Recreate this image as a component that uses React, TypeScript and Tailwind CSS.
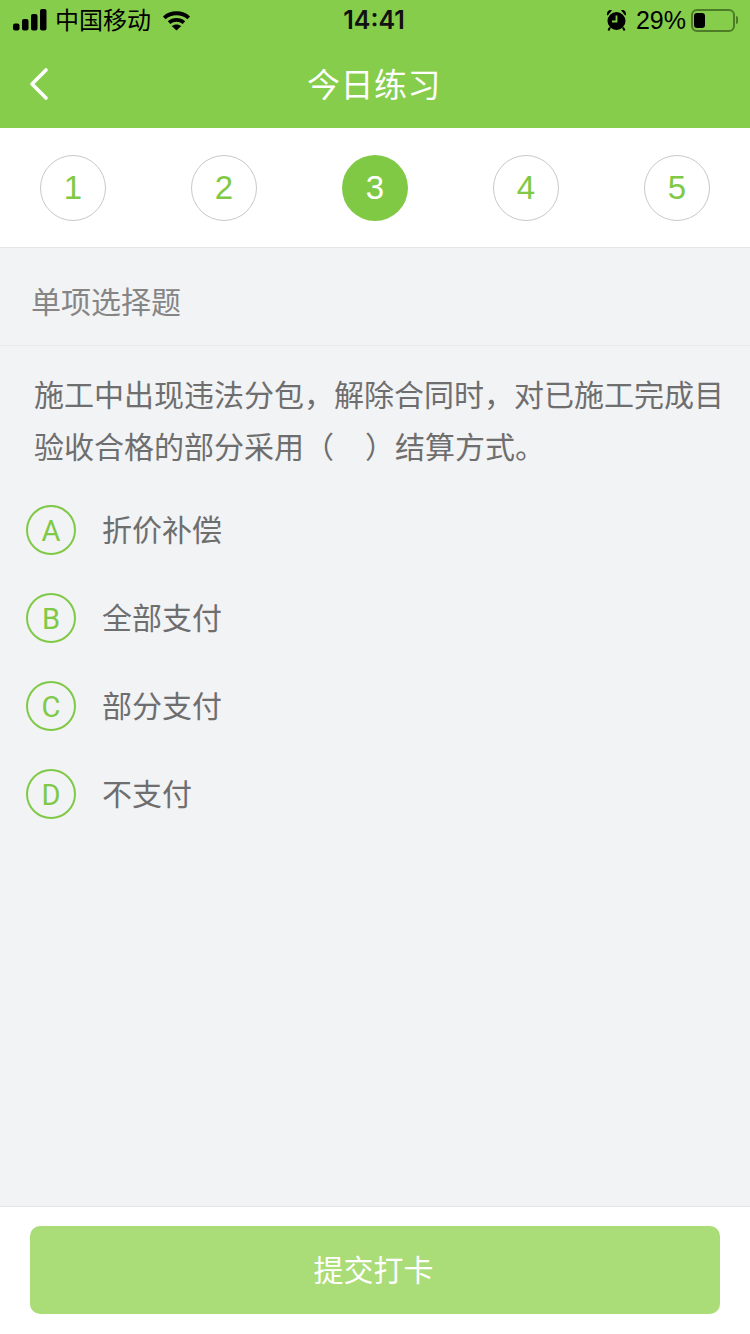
const font = "font-['Liberation_Sans','Noto_Sans_CJK_SC',sans-serif]";

function Signal() {
  return (
    <svg width="34" height="22" viewBox="0 0 34 22" fill="#000">
      <rect x="0" y="14.5" width="6.5" height="7" rx="2" />
      <rect x="9" y="10" width="6.5" height="11.5" rx="2" />
      <rect x="18" y="5" width="6.5" height="16.5" rx="2" />
      <rect x="27" y="0" width="6.5" height="21.5" rx="2" />
    </svg>
  );
}

function Wifi() {
  return (
    <svg width="29" height="20" viewBox="0 0 30 22" fill="none" stroke="#000" strokeWidth="4.2">
      <path d="M1.5 7.5C9 .8 21 .8 28.5 7.5" />
      <path d="M6.8 12.8C11.5 8.8 18.5 8.8 23.2 12.8" />
      <path d="M15 21.5 9.8 16.6C13 14.2 17 14.2 20.2 16.6Z" fill="#000" stroke="none" />
    </svg>
  );
}

function Alarm() {
  return (
    <svg width="21" height="22" viewBox="0 0 21 22">
      <circle cx="10.5" cy="12" r="9" fill="#000" />
      <path d="M1 6C.6 2.5 3 .5 6 1.2L1.8 6.5ZM20 6C20.4 2.5 18 .5 15 1.2L19.2 6.5Z" fill="#000" />
      <path d="M4 18.5 2.4 21.5M17 18.5 18.6 21.5" stroke="#000" strokeWidth="2" />
      <path d="M10.5 6.5V12.5H6" stroke="#86cd4b" strokeWidth="1.8" fill="none" />
    </svg>
  );
}

function Battery() {
  return (
    <div className="flex items-center">
      <div className="flex h-[23px] w-[44px] items-center rounded-[6px] border-2 border-[#4c7d26] p-[1px]">
        <div className="h-[15px] w-[11px] rounded-[3px] bg-black" />
      </div>
      <div className="ml-[1px] h-[8px] w-[2px] rounded-r-full bg-[#4c7d26]" />
    </div>
  );
}

function Step({ n, active }: { n: number; active?: boolean }) {
  return (
    <div
      className={
        active
          ? "flex h-[66px] w-[66px] items-center justify-center rounded-full bg-[#7fc944] text-[33px] text-white"
          : "flex h-[66px] w-[66px] items-center justify-center rounded-full border border-[#c9c9c9] bg-white text-[33px] text-[#7fc944]"
      }
    >
      {n}
    </div>
  );
}

function Option({ letter, text }: { letter: string; text: string }) {
  return (
    <div className="flex h-[88px] items-center pl-[26px]">
      <div className="flex h-[50px] w-[50px] shrink-0 items-center justify-center rounded-full border-2 border-[#80c946] pt-[3px] font-['Roboto',sans-serif] text-[29px] text-[#80c946]">
        {letter}
      </div>
      <div className="ml-[26px] text-[30px] text-[#6e6e6e]">{text}</div>
    </div>
  );
}

export default function App() {
  return (
    <div className={`flex h-[1334px] w-[750px] flex-col overflow-hidden bg-[#f2f3f5] ${font}`}>
      <header className="h-[128px] shrink-0 bg-[#86cd4b]">
        <div className="flex h-[40px] items-center justify-between pl-[13px] pr-[12px]">
          <div className="flex w-[240px] items-center">
            <Signal />
            <span className="ml-[8px] pt-[1px] text-[24px] leading-none text-black">中国移动</span>
            <span className="ml-[11px] pt-[1px]"><Wifi /></span>
          </div>
          <div className="pr-[3px] font-['Inter',sans-serif] text-[25px] font-semibold leading-none text-[#111111]">14:41</div>
          <div className="flex w-[240px] items-center justify-end">
            <Alarm />
            <span className="ml-[9px] mr-[5px] text-[25px] leading-none text-black">29%</span>
            <Battery />
          </div>
        </div>
        <div className="relative flex h-[88px] items-center justify-center pt-[2px]">
          <svg className="absolute left-[28px] top-[27px]" width="22" height="34" viewBox="0 0 22 34" fill="none" stroke="#fff" strokeWidth="3.6" strokeLinecap="round" strokeLinejoin="round">
            <path d="M18 3 4 17 18 31" />
          </svg>
          <h1 className="pr-[2px] text-[33px] font-normal leading-none tracking-[0.5px] text-white">今日练习</h1>
        </div>
      </header>

      <div className="flex h-[120px] shrink-0 items-center justify-between border-b border-[#e6e6e6] bg-white px-[40px] pt-[1px]">
        <Step n={1} />
        <Step n={2} />
        <Step n={3} active />
        <Step n={4} />
        <Step n={5} />
      </div>

      <div className="flex h-[98px] shrink-0 items-center border-b border-[#e9eaec] pl-[31px] pt-[11px] text-[30px] text-[#858585]">
        单项选择题
      </div>

      <div className="px-[34px] pt-[24px] text-[30px] leading-[52px] text-[#6e6e6e]">
        <div className="whitespace-nowrap">施工中出现违法分包，解除合同时，对已施工完成目</div>
        <div className="whitespace-nowrap">验收合格的部分采用（<span className="inline-block w-[31px]" />）结算方式。</div>
      </div>

      <div className="mt-[12px]">
        <Option letter="A" text="折价补偿" />
        <Option letter="B" text="全部支付" />
        <Option letter="C" text="部分支付" />
        <Option letter="D" text="不支付" />
      </div>

      <footer className="mt-auto flex h-[128px] shrink-0 justify-center border-t border-[#e6e6e6] bg-white pt-[19px]">
        <button className="flex h-[88px] w-[690px] items-center justify-center rounded-[10px] bg-[#aadc78] pr-[3px] text-[30px] text-white">
          提交打卡
        </button>
      </footer>
    </div>
  );
}
